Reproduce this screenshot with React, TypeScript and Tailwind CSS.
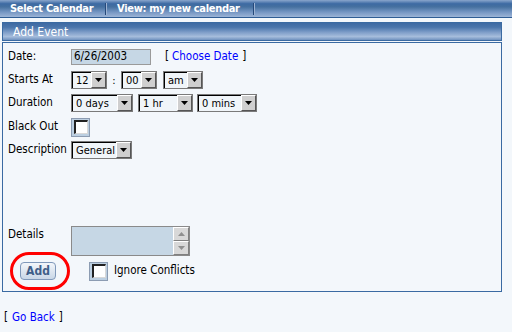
import type { ReactNode } from "react";

const Arrow = ({ up = false, muted = false }: { up?: boolean; muted?: boolean }) => (
  <svg width="7" height="4" viewBox="0 0 7 4" className={up ? "rotate-180" : ""}>
    <path d="M0 0h7L3.5 4z" fill={muted ? "#8f8f8f" : "#000"} />
  </svg>
);

const Select = ({ value, width }: { value: string; width: string }) => (
  <div
    className={`${width} h-[18px] flex items-center border border-[#7a7a7a] bg-[#f0f5f9]`}
  >
    <div className="flex-1 h-full flex items-center border-t border-l border-[#000] pl-[3px] text-[11px] leading-none">
      {value}
    </div>
    <div className="w-[15px] h-full flex items-center justify-center bg-[#cfcfcf] border-t border-l border-t-white border-l-white border-r border-b border-r-[#555] border-b-[#555]">
      <Arrow />
    </div>
  </div>
);

const Checkbox = () => (
  <div className="w-[19px] h-[19px] flex items-center justify-center bg-[#bccfe1] border border-[#8c9cb2]">
    <div className="w-[14px] h-[14px] bg-white border-t-2 border-l-2 border-[#222] border-r border-b border-r-[#d8d8d8] border-b-[#d8d8d8]" />
  </div>
);

const Row = ({ label, children, className = "" }: { label: string; children: ReactNode; className?: string }) => (
  <div className={`flex items-center ${className}`}>
    <div className="w-[63px] shrink-0 text-[11.5px]">{label}</div>
    {children}
  </div>
);

const Tab = ({ text, width }: { text: string; width: string }) => (
  <div className={`${width} h-full flex items-center`}>
    <span className="flex-1 pl-[10px] font-bold text-white text-[11px] tracking-[-0.3px]">{text}</span>
    <span className="w-[2px] h-[12px] border-l border-[#25497a] border-r border-r-[#9db3d3]" />
  </div>
);

export default function App() {
  return (
    <div className="w-[512px] h-[332px] overflow-hidden bg-[#f3f7fb] text-black text-[11px] leading-none font-['DejaVu_Sans_Condensed','DejaVu_Sans',sans-serif]">
      <div className="h-[18px] flex items-center border-b border-[#2f5d94] bg-[linear-gradient(to_bottom,#8aa6cc_0%,#3d6aa3_22%,#45709f_40%,#7495c2_70%,#9cb4d6_100%)]">
        <Tab text="Select Calendar" width="w-[107px]" />
        <Tab text="View: my new calendar" width="w-[148px]" />
      </div>

      <div className="ml-[2px] w-[500px] mt-[4px]">
        <div className="h-[19px] flex items-center pl-[10px] text-white text-[12px] border border-[#3a6aa2] bg-[linear-gradient(to_bottom,#3d6aa3_0%,#4a75ab_25%,#7f9ec9_55%,#a6bddc_80%,#6f91bf_100%)]">
          Add Event
        </div>

        <div className="relative mt-[1px] h-[250px] border border-[#3a6aa2] pl-[5px] pt-[6px]">
          <Row label="Date:" className="h-[16px]">
            <div className="w-[80px] h-[16px] flex items-center pl-[2px] bg-[#c6d7e5] border border-[#9a9a9a] text-[11.5px]">
              6/26/2003
            </div>
            <span className="ml-[14px] text-[11.5px]">[</span>
            <span className="ml-[3px] text-[#0000ff] text-[11.5px]">Choose Date</span>
            <span className="ml-[4px] text-[11.5px]">]</span>
          </Row>

          <Row label="Starts At" className="mt-[6px] h-[18px]">
            <Select value="12" width="w-[36px]" />
            <span className="w-[14px] text-center">:</span>
            <Select value="00" width="w-[36px]" />
            <span className="w-[6px]" />
            <Select value="am" width="w-[40px]" />
          </Row>

          <Row label="Duration" className="mt-[5px] h-[18px]">
            <Select value="0 days" width="w-[62px]" />
            <span className="w-[5px]" />
            <Select value="1 hr" width="w-[55px]" />
            <span className="w-[4px]" />
            <Select value="0 mins" width="w-[60px]" />
          </Row>

          <Row label="Black Out" className="mt-[6px] h-[18px]">
            <Checkbox />
          </Row>

          <Row label="Description" className="mt-[5px] h-[18px]">
            <Select value="General" width="w-[61px]" />
          </Row>

          <div className="flex items-start mt-[67px]">
            <div className="w-[63px] pt-[3px] text-[11.5px]">Details</div>
            <div className="w-[119px] h-[30px] flex bg-[#c6d7e5] border border-[#8a8a8a]">
              <div className="flex-1" />
              <div className="w-[16px] flex flex-col">
                <div className="flex-1 flex items-center justify-center bg-[#d8d8d8] border border-t-white border-l-white border-r-[#808080] border-b-[#808080]">
                  <Arrow up muted />
                </div>
                <div className="flex-1 flex items-center justify-center bg-[#d8d8d8] border border-t-white border-l-white border-r-[#808080] border-b-[#808080]">
                  <Arrow muted />
                </div>
              </div>
            </div>
          </div>

          <div className="flex items-center mt-[5px] h-[20px]">
            <div className="ml-[12px] w-[36px] h-[18px] flex items-center justify-center rounded-[4px] border border-[#7f98ba] bg-[linear-gradient(to_bottom,#f3f6fa,#c9d7e7)] font-bold text-[12px] text-[#3f5e88]">
              Add
            </div>
            <div className="ml-[33px]">
              <Checkbox />
            </div>
            <span className="ml-[6px] text-[11.5px]">Ignore Conflicts</span>
          </div>

          <div className="absolute left-[7px] top-[209px] w-[60px] h-[38px] rounded-[19px] border-[3px] border-[#ff0000]" />
        </div>
      </div>

      <div className="mt-[20px] pl-[4px] flex items-center text-[11.5px]">
        <span>[</span>
        <span className="ml-[4px] text-[#0000ff]">Go Back</span>
        <span className="ml-[4px]">]</span>
      </div>
    </div>
  );
}
